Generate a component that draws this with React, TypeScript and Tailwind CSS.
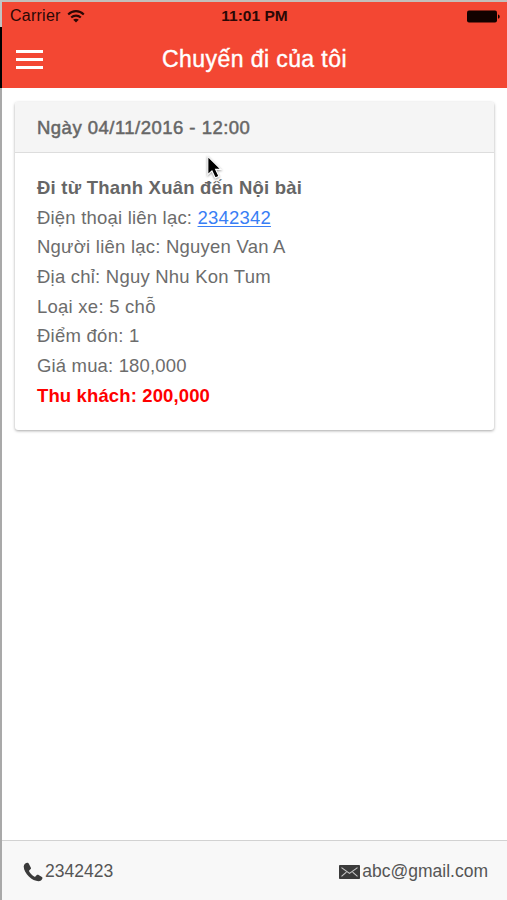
import clsx from 'clsx'

type Linha = {
  label: string
  value: string
  link?: boolean
  spacing: string
}

const details: Linha[] = [
  { label: 'Điện thoại liên lạc', value: '2342342', link: true, spacing: 'tracking-[0.2px]' },
  { label: 'Người liên lạc', value: 'Nguyen Van A', spacing: 'tracking-[0.23px]' },
  { label: 'Địa chỉ', value: 'Nguy Nhu Kon Tum', spacing: 'tracking-[0.22px]' },
  { label: 'Loại xe', value: '5 chỗ', spacing: 'tracking-[0.25px]' },
  { label: 'Điểm đón', value: '1', spacing: 'tracking-[0.25px]' },
  { label: 'Giá mua', value: '180,000', spacing: 'tracking-[0.16px]' },
]

function WifiIcon() {
  return (
    <svg className="ml-[6px] h-[13px] w-[18px]" viewBox="0 0 18 13" fill="none" stroke="#2b0805" strokeWidth="2.1">
      <path d="M1.2 4.4C5.6 0 12.4 0 16.8 4.4" />
      <path d="M4.2 7.6c2.7-2.6 6.9-2.6 9.6 0" />
      <path d="M9 12.4 6.2 9.8c1.5-1.4 4.1-1.4 5.6 0Z" fill="#2b0805" stroke="none" />
    </svg>
  )
}

function BatteryIcon() {
  return (
    <svg className="h-[13px] w-[34px]" viewBox="0 0 34 13" fill="#120200">
      <rect x="0" y="0.5" width="30" height="12" rx="2" />
      <path d="M31 4.4c2.3.3 2.3 3.9 0 4.2Z" />
    </svg>
  )
}

function StatusBar() {
  return (
    <div className="grid h-7 grid-cols-3 items-center text-[16px] text-[#2b0805]">
      <div className="flex items-center pl-2">
        <span className="tracking-[0.25px]">Carrier</span>
        <WifiIcon />
      </div>
      <div className="text-center text-[15.5px] font-bold">11:01 PM</div>
      <div className="flex justify-end pr-[6px]">
        <BatteryIcon />
      </div>
    </div>
  )
}

function NavBar() {
  return (
    <div className="grid h-[58px] grid-cols-[60px_1fr_60px] items-center">
      <button type="button" aria-label="Menu" className="flex flex-col gap-[5px] pl-[14px]">
        <span className="h-[3px] w-[27px] bg-white" />
        <span className="h-[3px] w-[27px] bg-white" />
        <span className="h-[3px] w-[27px] bg-white" />
      </button>
      <h1 className="text-center text-[23px] tracking-[0.42px] text-white [-webkit-text-stroke:0.4px_white]">
        Chuyến đi của tôi
      </h1>
    </div>
  )
}

function TripCard() {
  return (
    <section className="mx-[13px] mt-[14px] h-[328px] rounded-[3px] bg-white shadow-[0_1px_3px_rgba(0,0,0,0.35)]">
      <header className="flex h-[51px] items-center rounded-t-[3px] border-b border-[#dddddd] bg-[#f5f5f5] pt-[2px] pl-[22px] text-[18.5px] tracking-[0.48px] text-[#666666] [-webkit-text-stroke:0.5px_#666666]">
        Ngày 04/11/2016 - 12:00
      </header>
      <div className="pt-5 pl-[22px] text-[18.5px] leading-[29.65px] whitespace-nowrap text-[#6c6c6c]">
        <p className="font-bold tracking-[0.22px] text-[#666666]">Đi từ Thanh Xuân đến Nội bài</p>
        {details.map((item) => (
          <p key={item.label} className={item.spacing}>
            {item.label}:{' '}
            <span className={clsx(item.link && 'text-[#387ef5] underline underline-offset-2')}>
              {item.value}
            </span>
          </p>
        ))}
        <p className="font-bold tracking-[0.13px] text-[#ff0000]">Thu khách: 200,000</p>
      </div>
    </section>
  )
}

function PhoneIcon() {
  return (
    <svg className="h-5 w-5" viewBox="0 0 20 20" fill="#3b3b3b">
      <path d="M4.4.8C2.8 1 .8 2.2.7 4.5.9 11.6 9.4 19.2 15.5 19.2c2 0 3.4-1.3 3.9-2.8.2-.6 0-1-.5-1.3l-3.7-2.3c-.6-.3-1-.2-1.4.2l-1.4 1.4c-.4.4-.8.4-1.3.1-2.1-1.3-3.7-2.9-4.9-5-.3-.5-.2-.8.2-1.2l1.3-1.2c.4-.4.4-.8.2-1.3L5.7 1.5c-.3-.5-.7-.8-1.3-.7Z" />
    </svg>
  )
}

function MailIcon() {
  return (
    <svg className="h-[14px] w-[21px]" viewBox="0 0 21 15" preserveAspectRatio="none">
      <rect width="21" height="15" rx="0.8" fill="#3b3b3b" />
      <path d="m2.5 2.8 8 6.2 8-6.2M2.5 12.2 7.4 7.6M18.5 12.2l-4.9-4.6" fill="none" stroke="#c8c8c8" strokeWidth="1.1" />
    </svg>
  )
}

function Footer() {
  return (
    <footer className="flex h-[60px] items-center justify-between border-t border-[#d2d2d2] bg-[#f8f8f8] pt-[2px] pr-[19px] pl-[21px] text-[17.5px] text-[#555555]">
      <div className="flex items-center gap-[2px]">
        <PhoneIcon />
        <span>2342423</span>
      </div>
      <div className="flex items-center gap-[2px]">
        <MailIcon />
        <span>abc@gmail.com</span>
      </div>
    </footer>
  )
}

function Cursor() {
  return (
    <svg
      className="absolute top-[153px] left-[204px] h-[29px] w-[21px] drop-shadow-[0_1px_1px_rgba(0,0,0,0.4)]"
      viewBox="0 0 18 26"
    >
      <path d="M3 3v16.5l3.7-3.4 3 6.3 3.3-1.5-3-6.2h4.8Z" fill="#000" stroke="#fff" strokeWidth="1" />
    </svg>
  )
}

export default function App() {
  return (
    <div className="relative flex h-[900px] w-[507px] overflow-hidden bg-white font-['Liberation_Sans',Arial,sans-serif]">
      <div className="flex w-[2px] shrink-0 flex-col">
        <div className="h-[27px] bg-[#c3c3c3]" />
        <div className="h-[61px] bg-black" />
        <div className="flex-1 bg-[#a9a9a9]" />
      </div>
      <div className="flex min-w-0 flex-1 flex-col">
        <div className="h-[88px] border-t-2 border-[#c3bfbb] bg-[#f34733]">
          <StatusBar />
          <NavBar />
        </div>
        <main className="flex-1">
          <TripCard />
        </main>
        <Footer />
      </div>
      <Cursor />
    </div>
  )
}
